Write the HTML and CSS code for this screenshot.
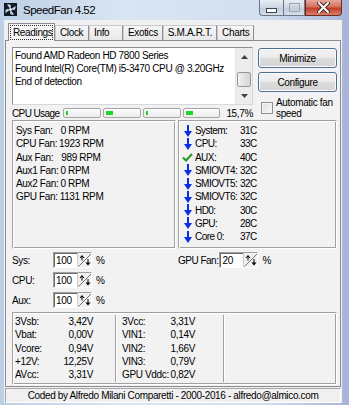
FILE: index.html
```html
<!DOCTYPE html>
<html lang="en">
<head>
  <meta charset="UTF-8">
  <title>SpeedFan 4.52</title>
  <link rel="stylesheet" href="styles.css">
</head>
<body>
  <div class="window">
    <!-- Title bar -->
    <div class="titlebar">
      <svg class="app-icon" width="13" height="13" viewBox="0 0 13 13">
        <rect width="13" height="13" fill="#161a22"/>
        <g fill="#b9d3ee">
          <path d="M6.5 6.5 L3 1.5 Q5.5 0.8 7 2.5 Z"/>
          <path d="M6.5 6.5 L11.5 3 Q12.2 5.5 10.5 7 Z"/>
          <path d="M6.5 6.5 L10 11.5 Q7.5 12.2 6 10.5 Z"/>
          <path d="M6.5 6.5 L1.5 10 Q0.8 7.5 2.5 6 Z"/>
        </g>
        <circle cx="6.5" cy="6.5" r="1.3" fill="#fff"/>
      </svg>
      <span class="title">SpeedFan 4.52</span>
      <div class="caption-btns">
        <span class="cap-btn cap-min">
          <svg width="11" height="5" viewBox="0 0 11 5"><rect x="0.5" y="0.5" width="10" height="4" fill="#fff" stroke="#3b4250"/></svg>
        </span>
        <span class="cap-btn cap-max">
          <svg width="11" height="9" viewBox="0 0 11 9"><rect x="0.5" y="0.5" width="10" height="8" fill="none" stroke="#9aa3b3"/><rect x="2.5" y="3.5" width="6" height="3" fill="none" stroke="#c6ccd6"/></svg>
        </span>
        <span class="cap-btn cap-close">
          <svg width="13" height="11" viewBox="0 0 13 11"><path d="M2 1 L11 10 M11 1 L2 10" stroke="#4a2a25" stroke-width="4" stroke-linecap="round"/><path d="M2 1 L11 10 M11 1 L2 10" stroke="#fff" stroke-width="2" stroke-linecap="round"/></svg>
        </span>
      </div>
    </div>

    <div class="client">
      <!-- Tabs -->
      <div class="tabs">
        <span class="tab active"><span class="focus">Readings</span></span>
        <span class="tab">Clock</span>
        <span class="tab">Info</span>
        <span class="tab">Exotics</span>
        <span class="tab">S.M.A.R.T.</span>
        <span class="tab">Charts</span>
      </div>

      <div class="panel">
        <div class="top">
          <div class="top-left">
            <div class="log">
              <div class="log-text">
                Found AMD Radeon HD 7800 Series<br>
                Found Intel(R) Core(TM) i5-3470 CPU @ 3.20GHz<br>
                End of detection
              </div>
              <div class="scrollbar">
                <span class="sb-btn"><svg width="7" height="4" viewBox="0 0 7 4"><path d="M0 4 L3.5 0 L7 4 Z" fill="#404040"/></svg></span>
                <span class="sb-track"><span class="sb-thumb"></span></span>
                <span class="sb-btn"><svg width="7" height="4" viewBox="0 0 7 4"><path d="M0 0 L3.5 4 L7 0 Z" fill="#404040"/></svg></span>
              </div>
            </div>
            <div class="usage">
              <span class="usage-label">CPU Usage</span>
              <span class="bar"><span class="fill" style="width:2px"></span></span>
              <span class="bar"><span class="fill" style="width:7px"></span></span>
              <span class="bar"><span class="fill" style="width:2px"></span></span>
              <span class="bar"><span class="fill" style="width:7px"></span></span>
              <span class="usage-value">15,7%</span>
            </div>
          </div>
          <div class="top-right">
            <button class="btn">Minimize</button>
            <button class="btn">Configure</button>
            <label class="check">
              <span class="check-box"></span>
              <span class="check-text">Automatic fan speed</span>
            </label>
          </div>
        </div>

        <div class="groups">
          <div class="group fans">
            <div class="fan-row">Sys Fan:<span class="val wide">0 RPM</span></div>
            <div class="fan-row">CPU Fan:<span class="val">1923 RPM</span></div>
            <div class="fan-row">Aux Fan:<span class="val wide">989 RPM</span></div>
            <div class="fan-row">Aux1 Fan:<span class="val">0 RPM</span></div>
            <div class="fan-row">Aux2 Fan:<span class="val">0 RPM</span></div>
            <div class="fan-row">GPU Fan:<span class="val">1131 RPM</span></div>
          </div>
          <div class="group temps">
            <div class="temp-row"><span class="ico down"></span><span>System:</span><span>31C</span></div>
            <div class="temp-row"><span class="ico down"></span><span>CPU:</span><span>33C</span></div>
            <div class="temp-row"><span class="ico ok"></span><span>AUX:</span><span>40C</span></div>
            <div class="temp-row"><span class="ico down"></span><span>SMIOVT4:</span><span>32C</span></div>
            <div class="temp-row"><span class="ico down"></span><span>SMIOVT5:</span><span>32C</span></div>
            <div class="temp-row"><span class="ico down"></span><span>SMIOVT6:</span><span>32C</span></div>
            <div class="temp-row"><span class="ico down"></span><span>HD0:</span><span>30C</span></div>
            <div class="temp-row"><span class="ico down"></span><span>GPU:</span><span>28C</span></div>
            <div class="temp-row"><span class="ico down"></span><span>Core 0:</span><span>37C</span></div>
          </div>
        </div>

        <div class="spins">
          <div class="spin-col">
            <div class="spin-row">
              <span class="spin-label">Sys:</span>
              <span class="field"><span class="field-text">100</span><span class="updown"></span></span>
              <span class="pct">%</span>
            </div>
            <div class="spin-row">
              <span class="spin-label">CPU:</span>
              <span class="field"><span class="field-text">100</span><span class="updown"></span></span>
              <span class="pct">%</span>
            </div>
            <div class="spin-row">
              <span class="spin-label">Aux:</span>
              <span class="field"><span class="field-text">100</span><span class="updown"></span></span>
              <span class="pct">%</span>
            </div>
          </div>
          <div class="spin-col">
            <div class="spin-row">
              <span class="spin-label gpu">GPU Fan:</span>
              <span class="field"><span class="field-text">20</span><span class="updown"></span></span>
              <span class="pct">%</span>
            </div>
          </div>
        </div>

        <div class="group volts">
          <div class="volt-col first">
            <span>3Vsb:</span><span class="v">3,42V</span>
            <span>Vbat:</span><span class="v">0,00V</span>
            <span>Vcore:</span><span class="v">0,94V</span>
            <span>+12V:</span><span class="v">12,25V</span>
            <span>AVcc:</span><span class="v">3,31V</span>
          </div>
          <div class="volt-col second">
            <span>3Vcc:</span><span class="v">3,31V</span>
            <span>VIN1:</span><span class="v">0,14V</span>
            <span>VIN2:</span><span class="v">1,66V</span>
            <span>VIN3:</span><span class="v">0,79V</span>
            <span>GPU Vddc:</span><span class="v">0,82V</span>
          </div>
          <div class="volt-col third"></div>
        </div>
      </div>

      <div class="statusbar">Coded by Alfredo Milani Comparetti - 2000-2016 - alfredo@almico.com</div>
    </div>
  </div>
</body>
</html>
```

FILE: styles.css
```css
* {
  box-sizing: border-box;
}

body {
  margin: 0;
  font-family: "Liberation Sans", Arial, sans-serif;
  font-size: 10px;
  letter-spacing: -0.35px;
  color: #000;
}

.window {
  width: 349px;
  height: 405px;
  display: flex;
  flex-direction: column;
  padding: 0 7px 2px 4px;
  background: linear-gradient(90deg, #bccfe6 0%, #d9e5f2 35%, #d3dff0 75%, #a9b3d8 100%);
}

/* Title bar */
.titlebar {
  height: 20px;
  display: flex;
  align-items: flex-start;
}

.app-icon {
  margin: 3px 6px 0 0;
  flex: none;
}

.title {
  font-size: 11.5px;
  letter-spacing: -0.5px;
  line-height: 14px;
  margin-top: 3px;
  color: #000;
}

.caption-btns {
  margin-left: auto;
  display: flex;
  height: 16px;
}

.cap-btn {
  display: flex;
  align-items: center;
  justify-content: center;
  height: 16px;
  border: 1px solid #6b7689;
  border-top: none;
}

.cap-min {
  width: 24px;
  border-radius: 0 0 0 4px;
  border-right: none;
  background: linear-gradient(#e9eef5, #cdd7e4 50%, #bfcbdb 51%, #d6dfeb);
  padding-top: 5px;
}

.cap-max {
  width: 22px;
  background: linear-gradient(#e9eef5, #cdd7e4 50%, #bfcbdb 51%, #d6dfeb);
}

.cap-close {
  width: 37px;
  border-radius: 0 0 4px 0;
  border-color: #6e2a22;
  background: linear-gradient(#e5a89c, #d4715f 45%, #c23e28 55%, #d9806c);
}

/* Client area */
.client {
  flex: 1;
  display: flex;
  flex-direction: column;
  background: #f0f0f0;
  padding: 3px 1px 0 1px;
}

.tabs {
  display: flex;
  align-items: flex-end;
  height: 17px;
  margin-left: 3px;
  position: relative;
  z-index: 1;
}

.tab {
  height: 15px;
  min-width: 34px;
  padding: 0 4px;
  line-height: 14px;
  border: 1px solid #c9cbd0;
  border-right-color: #8c8f96;
  border-bottom: none;
  background: linear-gradient(#f6f6f6, #e8e8e8);
}

.tab.active {
  width: 47px;
  height: 18px;
  margin-bottom: -1px;
  padding: 1px 2px 0;
  border-color: #898c95;
  background: #f5f5f5;
}

.tab .focus {
  display: block;
  outline: 1px dotted #333;
  padding: 0 2px;
  line-height: 13px;
  margin-top: 1px;
}

.panel {
  flex: 1;
  border: 1px solid #898c95;
  background: #f2f2f2;
  padding: 6px 3px 0 6px;
}

/* Top section */
.top {
  display: grid;
  grid-template-columns: 241px 79px;
  gap: 5px;
}

.log {
  height: 58px;
  display: flex;
  border: 1px solid #8e8f8f;
  border-right-color: #d8d8d8;
  border-bottom-color: #d8d8d8;
  background: #fff;
}

.log-text {
  flex: 1;
  padding: 1px 2px;
  line-height: 13px;
  white-space: nowrap;
  overflow: hidden;
}

.scrollbar {
  width: 17px;
  flex: none;
  display: flex;
  flex-direction: column;
  background: #ececec;
  border-left: 1px solid #e4e4e4;
}

.sb-btn {
  height: 17px;
  display: flex;
  align-items: center;
  justify-content: center;
}

.sb-track {
  flex: 1;
  display: flex;
  flex-direction: column;
  justify-content: flex-end;
  padding: 0 1px;
}

.sb-thumb {
  height: 15px;
  border: 1px solid #979797;
  border-radius: 2px;
  background: linear-gradient(90deg, #f3f3f3, #e2e2e2 50%, #d4d4d4);
}

.usage {
  display: flex;
  align-items: center;
  height: 12px;
  margin-top: 2px;
}

.usage-label {
  width: 51px;
  flex: none;
  white-space: nowrap;
  letter-spacing: -0.6px;
}

.bar {
  width: 38px;
  height: 10px;
  margin-right: 2px;
  border: 1px solid #a5a5a5;
  border-radius: 2px;
  background: linear-gradient(#fdfdfd, #ececec);
  padding: 2px;
  display: flex;
}

.bar .fill {
  height: 4px;
  background: #1fd524;
}

.usage-value {
  margin-left: 4px;
}

.top-right {
  padding-top: 1px;
  display: flex;
  flex-direction: column;
  gap: 4px;
}

.btn {
  height: 20px;
  font: inherit;
  letter-spacing: inherit;
  color: #000;
  border: 1px solid #4c6f96;
  border-radius: 3px;
  background: linear-gradient(#f2f2f2, #ebebeb 50%, #dddddd 51%, #d4d4d4);
  box-shadow: inset 0 0 0 1px #fbfbfb;
  padding: 0;
}

.check {
  display: flex;
  align-items: center;
  margin-top: 1px;
  height: 22px;
}

.check-box {
  width: 12px;
  height: 12px;
  margin: 0 3px 0 3px;
  border: 1px solid #8f8f8f;
  background: linear-gradient(135deg, #dcdcdc, #fbfbfb);
  box-shadow: inset 0 0 0 1px #f4f4f4;
  flex: none;
}

.check-text {
  line-height: 11px;
  width: 62px;
}

/* Group boxes */
.group {
  border: 1px solid #a0a0a0;
  border-right-color: #fff;
  border-bottom-color: #fff;
  box-shadow: inset 1px 1px 0 #fff, inset -1px -1px 0 #a0a0a0;
}

.groups {
  display: grid;
  grid-template-columns: 164px 159px;
  gap: 2px;
  height: 129px;
  margin-top: 1px;
}

.fans {
  padding: 3px 0 0 3px;
}

.fan-row {
  line-height: 13.3px;
}

.fan-row .val {
  margin-left: 2px;
}

.fan-row .val.wide {
  margin-left: 8px;
}

.temps {
  padding: 3px 0 0 4px;
}

.temp-row {
  display: grid;
  grid-template-columns: 12px 45px auto;
  align-items: center;
  line-height: 13.25px;
  letter-spacing: -0.55px;
}

.ico {
  width: 10px;
  height: 12px;
  background-repeat: no-repeat;
  background-position: center;
}

.ico.down {
  background-image: url("data:image/svg+xml,%3Csvg xmlns='http://www.w3.org/2000/svg' width='8' height='12' viewBox='0 0 8 12'%3E%3Cpath d='M4 0 V8' stroke='%230a2ee8' stroke-width='2'/%3E%3Cpath d='M0 6 L8 6 L4 12 Z' fill='%230a2ee8'/%3E%3C/svg%3E");
}

.ico.ok {
  width: 12px;
  margin-left: -2px;
  background-image: url("data:image/svg+xml,%3Csvg xmlns='http://www.w3.org/2000/svg' width='11' height='9' viewBox='0 0 11 9'%3E%3Cpath d='M1 4.5 L4 7.5 L10 1' stroke='%23229a22' stroke-width='2' fill='none'/%3E%3C/svg%3E");
}

/* Spin edits */
.spins {
  display: grid;
  grid-template-columns: 166px 1fr;
  margin-top: 3px;
}

.spin-col {
  display: flex;
  flex-direction: column;
  gap: 4px;
}

.spin-row {
  display: flex;
  align-items: center;
  height: 16px;
}

.spin-label {
  width: 41px;
  flex: none;
  white-space: nowrap;
}

.spin-label.gpu {
  width: auto;
  margin-right: 1px;
  letter-spacing: -0.5px;
}

.field {
  width: 39px;
  height: 16px;
  display: flex;
  background: #fff;
  border: 1px solid #a0a0a0;
  border-right-color: #fff;
  border-bottom-color: #fff;
  box-shadow: inset 1px 1px 0 #696969;
}

.field-text {
  flex: 1;
  padding: 1px 0 0 2px;
  line-height: 13px;
}

.updown {
  width: 14px;
  height: 14px;
  background: #f0f0f0 url("data:image/svg+xml,%3Csvg xmlns='http://www.w3.org/2000/svg' width='14' height='14' viewBox='0 0 14 14'%3E%3Cpath d='M0.5 13.5 L13.5 0.5' stroke='%23707070'/%3E%3Cpath d='M4 2 L6.5 5 L1.5 5 Z M3.5 4 V7.5 H4.5 V4 Z' fill='%23000'/%3E%3Cpath d='M10 12.5 L12.5 9.5 L7.5 9.5 Z M9.5 6 V10 H10.5 V6 Z' fill='%23000'/%3E%3C/svg%3E") no-repeat;
  border-left: 1px solid #c8c8c8;
}

.pct {
  margin-left: 4px;
}

/* Voltages */
.volts {
  margin-top: 4px;
  height: 73px;
  display: grid;
  grid-template-columns: 102px 108px 1fr;
}

.volt-col {
  display: grid;
  justify-content: space-between;
  line-height: 13.25px;
  align-content: start;
  white-space: nowrap;
}

.volt-col .v {
  text-align: right;
}

.volt-col.first {
  padding: 2px 22px 0 2px;
  grid-template-columns: 40px 38px;
}

.volt-col.second,
.volt-col.third {
  border-left: 1px solid #a0a0a0;
  box-shadow: inset 1px 0 0 #fff;
  margin: 2px 0 2px;
}

.volt-col.second {
  padding: 0 28px 0 6px;
  grid-template-columns: 47px 25px;
}

.statusbar {
  height: 15px;
  margin-top: 1px;
  border: 1px solid #a8a8a8;
  border-right-color: #fff;
  border-bottom-color: #fff;
  text-align: center;
  line-height: 13px;
  white-space: nowrap;
}
```
